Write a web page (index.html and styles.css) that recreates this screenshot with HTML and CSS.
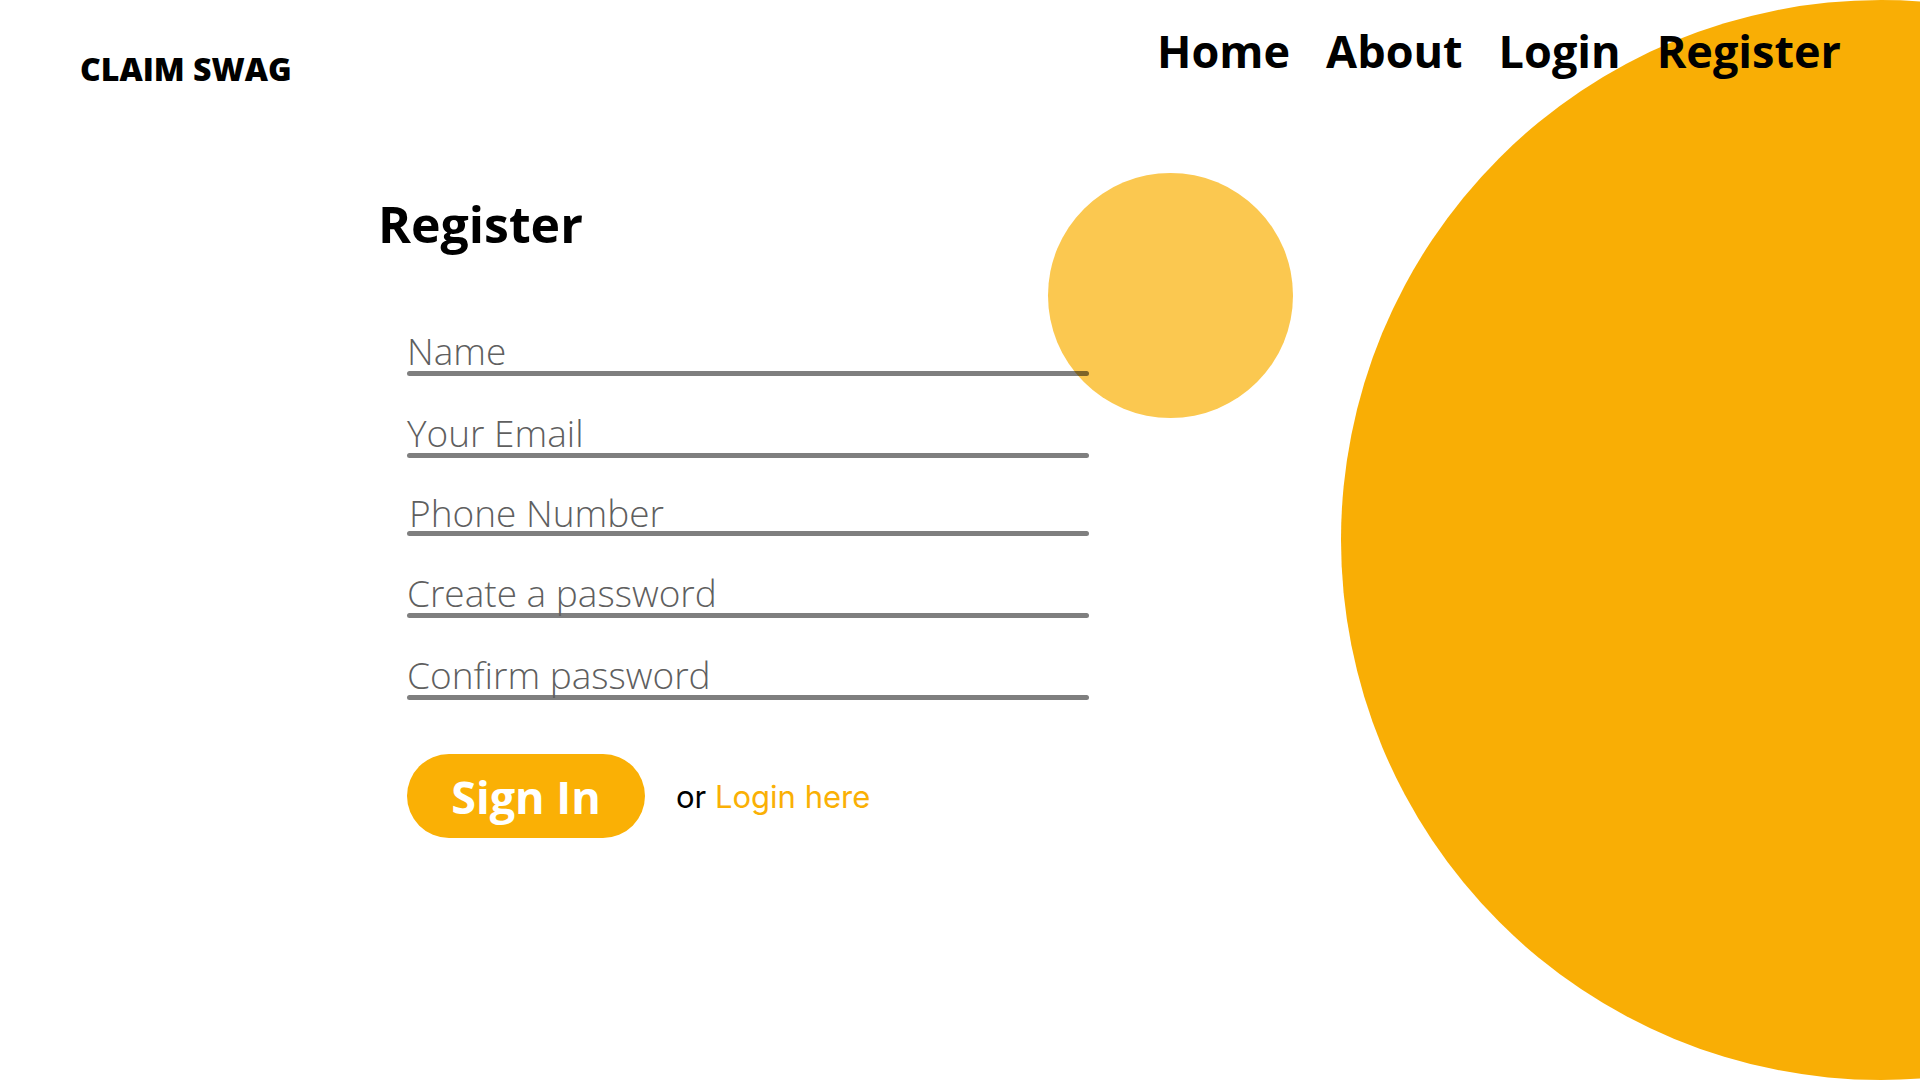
FILE: index.html
```html
<!DOCTYPE html>
<html lang="en">
<head>
<meta charset="utf-8">
<title>Claim Swag – Register</title>
<link rel="stylesheet" href="styles.css">
</head>
<body>
<div class="page">
  <div class="blob blob-big"></div>
  <div class="blob blob-small"></div>
  <header class="topbar">
    <div class="logo">CLAIM SWAG</div>
    <nav class="nav">
      <a class="nav-link" href="#">Home</a>
      <a class="nav-link" href="#">About</a>
      <a class="nav-link" href="#">Login</a>
      <a class="nav-link" href="#">Register</a>
    </nav>
  </header>
  <main class="content">
    <h1 class="title">Register</h1>
    <form class="form">
      <div class="field"><div class="field-text">Name</div><div class="field-line"></div></div>
      <div class="field"><div class="field-text">Your Email</div><div class="field-line"></div></div>
      <div class="field field-tight"><div class="field-text field-text-shift">Phone Number</div><div class="field-line field-line-close"></div></div>
      <div class="field"><div class="field-text">Create a password</div><div class="field-line"></div></div>
      <div class="field"><div class="field-text">Confirm password</div><div class="field-line"></div></div>
      <div class="actions">
        <button class="btn" type="button">Sign In</button>
        <span class="alt">or <a class="alt-link" href="#">Login here</a></span>
      </div>
    </form>
  </main>
</div>
</body>
</html>
```

FILE: styles.css
```css
* { box-sizing: border-box; }
html, body { margin: 0; padding: 0; background: #ffffff; }
body { font-family: "Open Sans", "Liberation Sans", sans-serif; color: #000; }

.page {
  position: relative;
  width: 1920px;
  height: 1080px;
  overflow: hidden;
}

.blob {
  position: absolute;
  border-radius: 50%;
  z-index: 0;
}
.blob-big {
  left: 1341px;
  top: 0;
  width: 1080px;
  height: 1080px;
  background: #f9ae05;
}
.blob-small {
  left: 1048px;
  top: 173px;
  width: 245px;
  height: 245px;
  background: #fbc850;
}

.topbar {
  position: relative;
  z-index: 1;
  display: flex;
  justify-content: space-between;
  align-items: flex-start;
  padding: 0 79px 0 80px;
}
.logo {
  margin-top: 53px;
  font-size: 32px;
  line-height: 1;
  font-weight: 800;
}
.nav {
  margin-top: 28px;
  display: flex;
  gap: 36px;
}
.nav-link {
  font-size: 45px;
  line-height: 1;
  font-weight: 700;
  color: #000;
  text-decoration: none;
}

.content {
  position: relative;
  z-index: 1;
  padding-left: 378px;
}
.title {
  margin: 114px 0 0 0;
  font-size: 50px;
  line-height: 1;
  font-weight: 700;
}

.form {
  margin: 83px 0 0 29px;
  width: 682px;
  display: flex;
  flex-direction: column;
  gap: 38px;
}
.field-tight { margin-top: -2px; }
.field-text {
  font-size: 37px;
  line-height: 1;
  font-weight: 300;
  color: #5f5f5f;
  white-space: nowrap;
}
.field-text-shift { padding-left: 2px; }
.field-line {
  margin-top: 2px;
  height: 5px;
  border-radius: 3px;
  background: rgba(0, 0, 0, 0.5);
}
.field-line-close { margin-top: 0; }

.actions {
  margin-top: 16px;
  display: flex;
  align-items: center;
  gap: 31px;
}
.btn {
  width: 238px;
  height: 84px;
  border: none;
  border-radius: 42px;
  background: #fab005;
  color: #ffffff;
  font-family: "Open Sans", "Liberation Sans", sans-serif;
  font-size: 45px;
  font-weight: 700;
  line-height: 1;
  padding: 0;
}
.alt {
  font-family: Inter, Lato, "Liberation Sans", sans-serif;
  font-size: 31px;
  line-height: 1;
  color: #000;
}
.alt-link {
  color: #fab005;
  text-decoration: none;
}
```
